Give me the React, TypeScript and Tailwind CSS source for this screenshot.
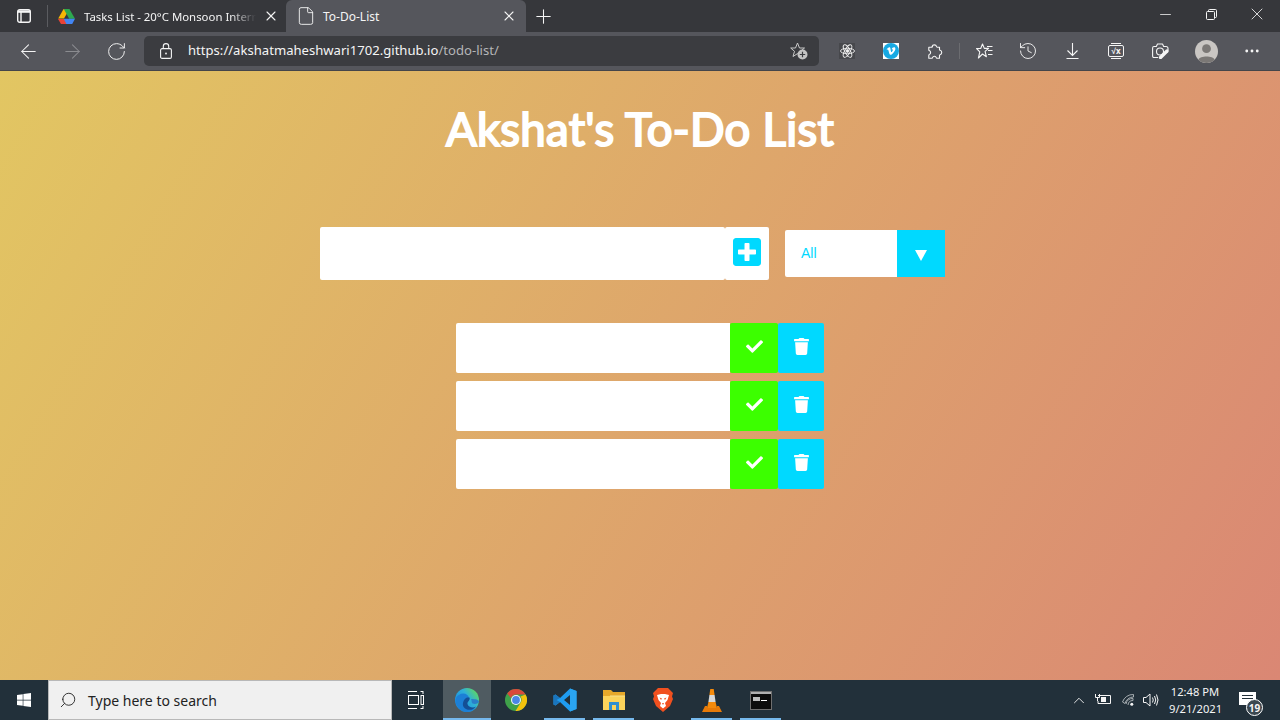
import {
  ArrowLeft,
  ArrowRight,
  ChevronUp,
  Ellipsis,
  File,
  History,
  Minus,
  Plus,
  RotateCw,
  Search,
  X,
} from "lucide-react";
import { FaCheck, FaPlusSquare, FaTrash, FaVimeoV, FaWindows } from "react-icons/fa";

const font = "[font-family:'Noto_Sans',sans-serif]";

function DriveIcon() {
  return (
    <svg width="17" height="15" viewBox="0 0 17 15">
      <polygon points="5.6,0 11.4,0 6,9.5 0.2,9.5" fill="#f6b704" />
      <polygon points="11.4,0 17,9.8 11.2,9.8 5.8,0" fill="#2da94f" />
      <polygon points="3,15 14.2,15 17,9.8 5.8,9.8" fill="#4285f4" />
      <polygon points="0,10 5.8,10 8.4,15 3,15" fill="#e94235" />
    </svg>
  );
}

function SidebarIcon() {
  return (
    <svg width="14" height="14" viewBox="0 0 14 14" fill="none" stroke="#f5f5f5" strokeWidth="1.4">
      <rect x="0.7" y="0.7" width="12.6" height="12.6" rx="2" />
      <path d="M1 2.6H13" strokeWidth="2.4" />
      <path d="M4 3V13" />
    </svg>
  );
}

function TabBar() {
  return (
    <div className="flex h-[32px] shrink-0 items-end bg-[#36373b] text-[#f5f5f5]">
      <div className="flex h-full w-[47px] items-center justify-center">
        <SidebarIcon />
      </div>
      <div className="my-auto h-[22px] w-px bg-[#5b5c60]" />
      <div className="flex h-full w-[238px] items-center pl-[10px]">
        <DriveIcon />
        <span
          className={`ml-[9px] w-[172px] pt-px text-[11.4px] whitespace-nowrap [mask-image:linear-gradient(90deg,black_85%,transparent)] ${font}`}
        >
          Tasks List - 20°C Monsoon Intern
        </span>
        <X size={16} strokeWidth={1.6} className="ml-[7px]" />
      </div>
      <div className="flex h-full w-[240px] items-center rounded-t-[6px] bg-[#55565c] pl-[10px]">
        <File size={20} strokeWidth={1.1} />
        <span className={`ml-[7px] w-[178px] pt-px text-[12px] ${font}`}>To-Do-List</span>
        <X size={16} strokeWidth={1.6} />
      </div>
      <div className="flex h-full w-[29px] items-center justify-end">
        <Plus size={23} strokeWidth={1.1} />
      </div>
      <div className="ml-auto flex h-full items-center pb-[4px]">
        <div className="flex w-[46px] justify-center">
          <Minus size={17} strokeWidth={1.1} />
        </div>
        <div className="flex w-[46px] justify-center">
          <svg width="11" height="11" viewBox="0 0 11 11" fill="none" stroke="#f5f5f5">
            <rect x="0.5" y="2.5" width="8" height="8" rx="1" />
            <path d="M2.5 2.5V1.5Q2.5 0.5 3.5 0.5H9.5Q10.5 0.5 10.5 1.5V7.5Q10.5 8.5 9.5 8.5H8.5" />
          </svg>
        </div>
        <div className="flex w-[46px] justify-center">
          <X size={20} strokeWidth={1} />
        </div>
      </div>
    </div>
  );
}

function ToolIcon({ children }: { children: React.ReactNode }) {
  return <div className="flex w-[44px] justify-center">{children}</div>;
}

function LockIcon() {
  return (
    <svg width="12" height="16" viewBox="0 0 12 16" fill="none" stroke="#f5f5f5" strokeWidth="1.1">
      <rect x="0.6" y="5.6" width="10.8" height="9.8" rx="1.5" />
      <path d="M3.3 5.5V3.3a2.7 2.7 0 0 1 5.4 0V5.5" />
      <circle cx="6" cy="10.5" r="0.9" fill="#f5f5f5" stroke="none" />
    </svg>
  );
}

function StarAddIcon() {
  return (
    <svg width="18" height="18" viewBox="0 0 18 18">
      <path
        d="M7.5 1L9.5 6H14.5L10.5 9.3L12 14.5L7.5 11.6L3 14.5L4.5 9.3L0.7 6H5.5Z"
        fill="none"
        stroke="#c9c9c9"
        strokeWidth="1"
        strokeLinejoin="round"
      />
      <circle cx="12.5" cy="12.5" r="5" fill="#c4c4c4" />
      <path d="M12.5 9.8V15.2M9.8 12.5H15.2" stroke="#3b3c40" strokeWidth="1.2" />
    </svg>
  );
}

function ReactExtIcon() {
  return (
    <div className="flex h-[16px] w-[16px] items-center justify-center bg-[#47484c]">
      <svg width="15" height="14" viewBox="0 0 15 14" fill="none" stroke="#f0f0f0" strokeWidth="0.9">
        <ellipse cx="7.5" cy="7" rx="7" ry="2.7" />
        <ellipse cx="7.5" cy="7" rx="7" ry="2.7" transform="rotate(60 7.5 7)" />
        <ellipse cx="7.5" cy="7" rx="7" ry="2.7" transform="rotate(120 7.5 7)" />
        <circle cx="7.5" cy="7" r="1.4" fill="#f0f0f0" />
      </svg>
    </div>
  );
}

function PuzzleIcon() {
  return (
    <svg width="16" height="17" viewBox="0 0 16 17" fill="none" stroke="#f5f5f5" strokeWidth="1.1" strokeLinejoin="round">
      <path d="M5 3.6a2.4 2.4 0 0 1 4.6 0q0 .6 .6 .6h2.3v2.5q0 .6 .6 .6a2.3 2.3 0 0 1 0 4.4q-.6 0 -.6 .6v2.9h-2.6q-.6 0 -.6 -.5a2 2 0 0 0 -3.8 0q0 .5 -.6 .5h-3.1v-3q0 -.6 .5 -.7a2.1 2.1 0 0 0 0 -3.9q-.5 -.1 -.5 -.7v-2.7h3.2q.6 0 .6 -.6z" />
    </svg>
  );
}

function FavouritesIcon() {
  return (
    <svg width="17" height="16" viewBox="0 0 17 16" fill="none" stroke="#f5f5f5" strokeWidth="1.1" strokeLinejoin="round">
      <path d="M6.5 1L8.3 5.4H12.6L9.1 8.4L10.4 13.8L6.5 11L2.4 15L3.8 8.9L0.6 5.5H4.7Z" />
      <path d="M11 3.5H16.5M12 7.5H16.5M12 11.5H16.5" />
    </svg>
  );
}

function DownloadIcon() {
  return (
    <svg width="13" height="16" viewBox="0 0 13 16" fill="none" stroke="#f5f5f5" strokeWidth="1.1">
      <path d="M6.5 0V12M1.5 7.5L6.5 12.5L11.5 7.5M0.5 15.5H12.5" />
    </svg>
  );
}

function MathIcon() {
  return (
    <div className="relative flex h-[12px] w-[16px] items-center justify-center rounded-[2px] border border-[#f5f5f5] text-[8px] leading-none font-bold text-[#f5f5f5]">
      <div className="absolute -top-[3px] left-[2px] h-px w-[10px] bg-[#f5f5f5]" />
      <div className="absolute -bottom-[3px] left-[2px] h-px w-[10px] bg-[#f5f5f5]" />
      √x
    </div>
  );
}

function CaptureIcon() {
  return (
    <svg width="17" height="16" viewBox="0 0 17 16" fill="none" stroke="#f5f5f5" strokeWidth="1.1" strokeLinejoin="round">
      <path d="M2 3.5H4.3L5.5 1H10.5L11.7 3.5H14Q16 3.5 16 5.5V7M6 14.5H2Q0.6 14.5 0.6 13V5Q0.6 3.5 2 3.5" />
      <circle cx="8" cy="8.5" r="3.5" />
      <path d="M8.5 14.5L15 8" stroke="#f5f5f5" strokeWidth="3.4" strokeLinecap="round" />
    </svg>
  );
}

function Toolbar() {
  return (
    <div className="flex h-[39px] shrink-0 items-center border-b border-[#44454a] bg-[#55565c] text-[#f5f5f5]">
      <div className="flex w-[144px] items-center pl-[6px]">
        <ToolIcon>
          <ArrowLeft size={23} strokeWidth={1.1} />
        </ToolIcon>
        <ToolIcon>
          <ArrowRight size={23} strokeWidth={1.1} className="text-[#8b8c90]" />
        </ToolIcon>
        <ToolIcon>
          <RotateCw size={21} strokeWidth={1.1} />
        </ToolIcon>
      </div>
      <div className="flex h-[30px] w-[675px] items-center rounded-[5px] bg-[#3b3c40] pl-[16px]">
        <LockIcon />
        <span className={`ml-[16px] text-[13.1px] ${font}`}>
          https://akshatmaheshwari1702.github.io<span className="text-[#b5b5b7]">/todo-list/</span>
        </span>
        <div className="ml-auto mr-[11px]">
          <StarAddIcon />
        </div>
      </div>
      <div className="ml-[6px] flex items-center">
        <ToolIcon>
          <ReactExtIcon />
        </ToolIcon>
        <ToolIcon>
          <div className="flex h-[16px] w-[16px] items-center justify-center bg-white">
            <div className="flex h-[16px] w-[16px] items-center justify-center rounded-full bg-[#17a9e3]">
              <FaVimeoV size={10} color="#ffffff" />
            </div>
          </div>
        </ToolIcon>
        <ToolIcon>
          <PuzzleIcon />
        </ToolIcon>
        <div className="ml-[2px] h-[16px] w-px bg-[#6b6c70]" />
        <div className="ml-[2px] flex items-center">
          <ToolIcon>
            <FavouritesIcon />
          </ToolIcon>
          <ToolIcon>
            <History size={20} strokeWidth={1.1} />
          </ToolIcon>
          <ToolIcon>
            <DownloadIcon />
          </ToolIcon>
          <ToolIcon>
            <MathIcon />
          </ToolIcon>
          <ToolIcon>
            <CaptureIcon />
          </ToolIcon>
          <div className="ml-[2px]">
            <ToolIcon>
              <svg width="23" height="23" viewBox="0 0 24 24">
                <circle cx="12" cy="12" r="12" fill="#c9c6c3" />
                <circle cx="12" cy="9" r="4.6" fill="#7b7876" />
                <path d="M3.5 20.5C5 16 19 16 20.5 20.5C16 25 8 25 3.5 20.5Z" fill="#7b7876" />
              </svg>
            </ToolIcon>
          </div>
          <div className="ml-[2px]">
            <ToolIcon>
              <Ellipsis size={18} strokeWidth={1.8} />
            </ToolIcon>
          </div>
        </div>
      </div>
    </div>
  );
}

function TodoRow() {
  return (
    <div className="flex h-[50px] w-[368px]">
      <div className="w-[274px] rounded-l-[2px] bg-white" />
      <div className="flex w-[48px] items-center justify-center rounded-[2px] bg-[#3cff00] pb-[3px] text-white">
        <FaCheck size={17} />
      </div>
      <div className="flex w-[46px] items-center justify-center rounded-[2px] bg-[#00d9ff] pb-[3px] text-white">
        <FaTrash size={17} />
      </div>
    </div>
  );
}

function TodoPage() {
  return (
    <div className="min-h-0 flex-1 bg-[linear-gradient(120deg,#e2c662,#da8774)]">
      <h1 className="pt-[31px] text-center text-[45.5px] leading-[54px] font-normal tracking-[0.3px] text-white [font-family:Lato,sans-serif] [-webkit-text-stroke:2px_white]">
        Akshat's To-Do List
      </h1>
      <div className="mt-[71px] flex items-center pl-[320px]">
        <div className="h-[53px] w-[405px] rounded-[2px] bg-white" />
        <div className="flex h-[53px] w-[44px] items-center justify-end rounded-[2px] bg-white pr-[6px] pb-[4px]">
          <FaPlusSquare size={32} color="#00d9ff" />
        </div>
        <div className="ml-[16px] flex h-[47px] w-[160px] items-center overflow-hidden rounded-l-[2px] bg-white">
          <span className="w-[112px] pl-[16px] text-[14px] text-[#00d9ff] [font-family:'Liberation_Sans',sans-serif]">
            All
          </span>
          <div className="flex h-full w-[48px] items-center justify-center bg-[#00d9ff] pt-[3px]">
            <svg width="12" height="11" viewBox="0 0 12 11">
              <polygon points="0,0 12,0 6,11" fill="#ffffff" />
            </svg>
          </div>
        </div>
      </div>
      <div className="mt-[43px] flex flex-col items-center gap-[8px]">
        <TodoRow />
        <TodoRow />
        <TodoRow />
      </div>
    </div>
  );
}

function EdgeIcon() {
  return (
    <svg width="24" height="24" viewBox="0 0 24 24">
      <defs>
        <linearGradient id="edge" x1="0.1" y1="0.7" x2="0.9" y2="0.1">
          <stop offset="0" stopColor="#1a8fe0" />
          <stop offset="0.55" stopColor="#2fb0d8" />
          <stop offset="1" stopColor="#5fd860" />
        </linearGradient>
      </defs>
      <circle cx="12" cy="12" r="12" fill="url(#edge)" />
      <path d="M1 10C4 4 13 4 14 10C14.5 13 11 14 11 16C11 19.5 16 22 20 20.5C17 23.5 13 24 11 24C4 23 -1 16 1 10Z" fill="#1c7fd6" />
      <path d="M14.5 9.5C15.5 12.5 12 13.5 12.5 16C13 19 18 20.5 21 18.5C18.5 22.5 12 23 9 19.5C6.5 16.5 8.5 11 12 9.5Z" fill="#144f96" />
      <path d="M24 13.5C24 15.5 20 16.5 17.5 15.5C16 14.5 17 12 16 11C18 11 23 11 24 13.5Z" fill="#2a7fc9" />
    </svg>
  );
}

function ChromeIcon() {
  return (
    <svg width="22" height="22" viewBox="0 0 22 22">
      <circle cx="11" cy="11" r="11" fill="#3fa14a" />
      <path d="M11 0A11 11 0 0 1 20.5 5.5H11A5.5 5.5 0 0 0 5.9 9L2.2 4.4A11 11 0 0 1 11 0Z" fill="#d9483b" />
      <path d="M20.5 5.5A11 11 0 0 1 10.5 22L15.6 13.8A5.5 5.5 0 0 0 15.5 7.5L20.5 5.5Z" fill="#f4c20d" />
      <circle cx="11" cy="11" r="5" fill="#f5f5f5" />
      <circle cx="11" cy="11" r="3.9" fill="#4a86e8" />
    </svg>
  );
}

function VsCodeIcon() {
  return (
    <svg width="24" height="24" viewBox="0 0 24 24">
      <path d="M17 0.5L23.5 3V21L17 23.5L7 14L2.5 17.5L0.5 16.5V7.5L2.5 6.5L7 10L17 0.5ZM17 7L11 12L17 17Z" fill="#1f9cf0" />
      <path d="M7 10L2.5 6.5L0.5 7.5V16.5L2.5 17.5L7 14L3.5 12Z" fill="#1a75bd" />
      <path d="M17 0.5L23.5 3V21L17 23.5Z" fill="#2aa5f2" />
    </svg>
  );
}

function FilesIcon() {
  return (
    <svg width="22" height="22" viewBox="0 0 22 22">
      <path d="M0 1H8L10 3H22V9H0Z" fill="#e6a82a" />
      <rect x="0" y="7" width="22" height="14" fill="#fbd35b" />
      <path d="M7 6.5H22V7.5H7Z" fill="#f7e08e" />
      <rect x="6" y="13" width="10" height="8" fill="#2f8fd0" />
      <rect x="9" y="16" width="4" height="5" fill="#fbd35b" />
    </svg>
  );
}

function BraveIcon() {
  return (
    <svg width="20" height="24" viewBox="0 0 20 24">
      <path d="M5 0H15L17.5 2.5L20 5L19 8.5L20 11L17 18L10 24L3 18L0 11L1 8.5L0 5L2.5 2.5Z" fill="#f1501f" />
      <path d="M4 7L8 6H12L16 7L14.5 12L12 15L13 18L10 20.5L7 18L8 15L5.5 12Z" fill="#ffffff" />
      <path d="M6.5 9.5L9 10.5L8 12ZM13.5 9.5L11 10.5L12 12ZM9 15H11L10 17Z" fill="#f1501f" />
    </svg>
  );
}

function VlcIcon() {
  return (
    <svg width="20" height="23" viewBox="0 0 20 23">
      <polygon points="8.3,0 11.7,0 12.6,6 7.4,6" fill="#f58a0b" />
      <polygon points="7.4,6 12.6,6 13.6,13 6.4,13" fill="#d8d8d8" />
      <polygon points="6.4,13 13.6,13 15,19 5,19" fill="#f58a0b" />
      <polygon points="3,17 5.2,17 5,19 15,19 14.8,17 17,17 20,23 0,23" fill="#e87a08" />
    </svg>
  );
}

function TerminalIcon() {
  return (
    <div className="h-[19px] w-[22px] border border-[#6f6f6f] bg-[#0c0c0c]">
      <div className="h-[2px] bg-[#b0b0b0]" />
      <div className="mt-[3px] ml-[2px] flex items-end">
        <div className="h-[4px] w-[7px] bg-[#bdbdbd]" />
        <div className="ml-[1px] h-px w-[6px] bg-white" />
      </div>
    </div>
  );
}

function AppCell({
  children,
  width,
  active,
  running,
}: {
  children: React.ReactNode;
  width: string;
  active?: boolean;
  running?: boolean;
}) {
  return (
    <div className={`relative flex h-full items-center justify-center ${width} ${active ? "bg-[#4f5b61]" : ""}`}>
      {children}
      {running && <div className={`absolute bottom-0 h-[2px] bg-[#76b9ed] ${active ? "inset-x-0" : "inset-x-[4px]"}`} />}
    </div>
  );
}

function WifiIcon() {
  return (
    <svg width="12" height="12" viewBox="0 0 12 12" fill="none" stroke="#a5acb0" strokeWidth="1">
      <path d="M0.5 8A11 11 0 0 1 11.5 0.5V3A8.5 8.5 0 0 0 3 9.5ZM4 10A7 7 0 0 1 11 4.5V6.5A5 5 0 0 0 6 11" />
      <circle cx="9.8" cy="10.2" r="1.5" fill="#f5f5f5" stroke="none" />
    </svg>
  );
}

function Taskbar() {
  return (
    <div className="flex h-[40px] shrink-0 items-center bg-[#22303a] text-white">
      <div className="flex h-full w-[48px] items-center justify-center">
        <FaWindows size={16} />
      </div>
      <div className="flex h-full w-[344px] items-center border border-[#b8b8b8] bg-[#f0f0f0] pl-[10px] text-[#222222]">
        <Search size={18} strokeWidth={1.2} className="-scale-x-100" />
        <span className={`ml-[11px] text-[14px] ${font}`}>Type here to search</span>
      </div>
      <div className="flex h-full w-[51px] items-center justify-center pr-[4px]">
        <svg width="16" height="18" viewBox="0 0 16 18" fill="none" stroke="#ffffff" strokeWidth="1">
          <path d="M0 0.5H9M0 17.5H9M15 0V3M12.5 0.5H15M12.5 17.5H15M15 15V18" />
          <rect x="0.5" y="4.5" width="10" height="9" />
          <rect x="13" y="4.5" width="2.5" height="9" />
        </svg>
      </div>
      <AppCell width="w-[48px]" active running>
        <EdgeIcon />
      </AppCell>
      <AppCell width="w-[49px]">
        <ChromeIcon />
      </AppCell>
      <AppCell width="w-[49px]" running>
        <VsCodeIcon />
      </AppCell>
      <AppCell width="w-[49px]" running>
        <FilesIcon />
      </AppCell>
      <AppCell width="w-[49px]">
        <BraveIcon />
      </AppCell>
      <AppCell width="w-[49px]" running>
        <VlcIcon />
      </AppCell>
      <AppCell width="w-[49px]" running>
        <TerminalIcon />
      </AppCell>
      <div className="ml-auto flex h-full items-center pr-[24px] text-[#f5f5f5]">
        <div className="flex w-[18px] justify-center">
          <ChevronUp size={21} strokeWidth={1.2} />
        </div>
        <svg className="ml-[7px]" width="16" height="12" viewBox="0 0 16 12" fill="none" stroke="#f5f5f5">
          <path d="M0.5 0V3.5H4.5V0M2.5 4V7" />
          <path d="M3 1.5H15.5V9.5H3V7" />
          <rect x="6" y="3" width="5" height="5" fill="#f5f5f5" stroke="none" />
        </svg>
        <div className="ml-[11px]">
          <WifiIcon />
        </div>
        <svg className="ml-[9px]" width="16" height="14" viewBox="0 0 16 14" fill="none" stroke="#f5f5f5">
          <path d="M0.5 4.5H3L7 1V13L3 9.5H0.5Z" />
          <path d="M9.5 4.5Q11 7 9.5 9.5M11.5 3Q14 7 11.5 11M13.5 1.5Q16.5 7 13.5 12.5" />
        </svg>
        <div className={`ml-[10px] w-[52px] text-center text-[11.2px] leading-[17px] whitespace-nowrap ${font}`}>
          <div>12:48 PM</div>
          <div>9/21/2021</div>
        </div>
        <div className="relative ml-[18px] mb-[3px] h-[13px] w-[17px] bg-white">
          <div className="mx-[3px] mt-[3px] h-px bg-[#22303a]" />
          <div className="mx-[3px] mt-[2px] h-px bg-[#22303a]" />
          <div className="absolute -right-[7px] -bottom-[11px] flex h-[17px] w-[17px] items-center justify-center rounded-full border border-white bg-[#3c4850] text-[10px] leading-none font-bold">
            19
          </div>
        </div>
      </div>
    </div>
  );
}

export default function App() {
  return (
    <div className="flex h-[720px] w-[1280px] flex-col overflow-hidden">
      <TabBar />
      <Toolbar />
      <TodoPage />
      <Taskbar />
    </div>
  );
}
